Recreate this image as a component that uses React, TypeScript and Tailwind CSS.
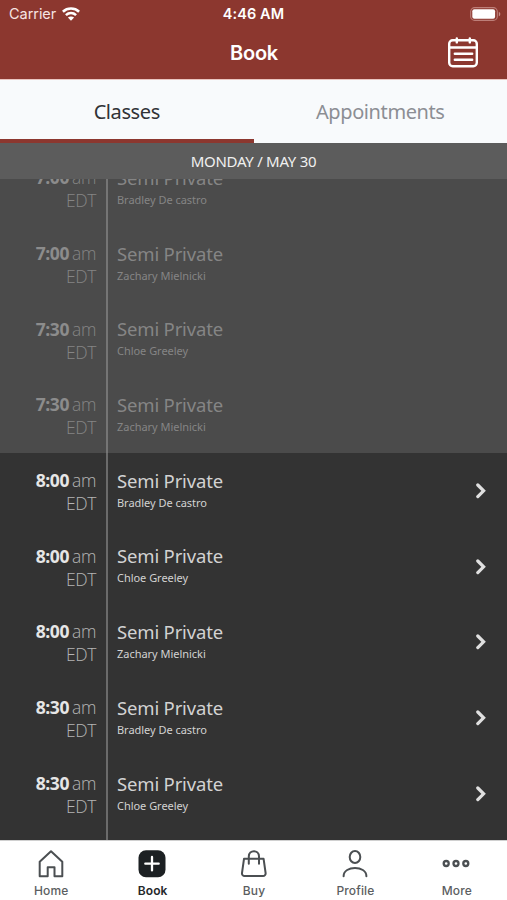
import React from "react";

type Session = { time: string; coach: string; past?: boolean };

const sessions: Session[] = [
  { time: "7:00", coach: "Bradley De castro", past: true },
  { time: "7:00", coach: "Zachary Mielnicki", past: true },
  { time: "7:30", coach: "Chloe Greeley", past: true },
  { time: "7:30", coach: "Zachary Mielnicki", past: true },
  { time: "8:00", coach: "Bradley De castro" },
  { time: "8:00", coach: "Chloe Greeley" },
  { time: "8:00", coach: "Zachary Mielnicki" },
  { time: "8:30", coach: "Bradley De castro" },
  { time: "8:30", coach: "Chloe Greeley" },
];

function WifiIcon() {
  return (
    <svg width="18" height="14" viewBox="0 0 18 14" fill="none" stroke="#fff" strokeWidth="2.6">
      <path d="M.9 4.7C5.4.5 12.6.5 17.1 4.7" />
      <path d="M3.9 8.1c3-2.7 7.2-2.7 10.2 0" />
      <path d="M9 13.7 5.9 10.6c1.7-1.6 4.5-1.6 6.2 0Z" fill="#fff" stroke="none" />
    </svg>
  );
}

function BatteryIcon() {
  return (
    <svg width="31" height="14" viewBox="0 0 31 14" fill="none">
      <rect x=".7" y=".6" width="26.6" height="12.8" rx="4" stroke="#bd7f79" strokeWidth="1.1" />
      <rect x="2.3" y="2.3" width="22.8" height="9.4" rx="2" fill="#fff" />
      <path d="M28.8 4.7c2 .8 2 3.8 0 4.6Z" fill="#c58d87" />
    </svg>
  );
}

function CalendarIcon() {
  return (
    <svg width="32" height="32" viewBox="0 0 32 32" fill="none" stroke="#fff" strokeWidth="2.4" strokeLinecap="round">
      <rect x="2.2" y="4.2" width="27.6" height="26" rx="3.5" />
      <path d="M2.2 11.5h27.6M9.8 2.4v4M22.8 2.4v4M7.8 17.7h17.4M7.8 23.8h17.4" />
    </svg>
  );
}

function HomeIcon() {
  return (
    <svg width="28" height="30" viewBox="0 0 28 30" fill="none" stroke="#4b4f52" strokeWidth="2" strokeLinejoin="round">
      <path d="M2.7 12.8 14 2.2l11.3 10.6v14.4h-7.8v-9h-6.8v9h-8Z" />
    </svg>
  );
}

function BookIcon() {
  return (
    <svg width="28" height="30" viewBox="0 0 28 30" fill="none">
      <rect x=".5" y="1.2" width="27" height="27" rx="7.5" fill="#1c2023" />
      <path d="M14 8v13.4M7.3 14.7h13.4" stroke="#fff" strokeWidth="2.3" strokeLinecap="round" />
    </svg>
  );
}

function BagIcon() {
  return (
    <svg width="28" height="30" viewBox="0 0 28 30" fill="none" stroke="#4b4f52" strokeWidth="2" strokeLinecap="round" strokeLinejoin="round">
      <path d="M4 9.8h19.6l2 14.2a2.6 2.6 0 0 1-2.6 3H4.6A2.6 2.6 0 0 1 2 24Z" />
      <path d="M8.8 14.7V7.4c0-7 10.2-7 10.2 0v7.3" />
    </svg>
  );
}

function ProfileIcon() {
  return (
    <svg width="28" height="30" viewBox="0 0 28 30" fill="none" stroke="#4b4f52" strokeWidth="2" strokeLinecap="round">
      <ellipse cx="14" cy="8" rx="5.3" ry="6" />
      <path d="M2.6 27.2c0-11 22.8-11 22.8 0" />
    </svg>
  );
}

function MoreIcon() {
  return (
    <svg width="28" height="30" viewBox="0 0 28 30" fill="none" stroke="#4b4f52" strokeWidth="2.3">
      <circle cx="4.2" cy="14.5" r="2.5" />
      <circle cx="14" cy="14.5" r="2.5" />
      <circle cx="23.8" cy="14.5" r="2.5" />
    </svg>
  );
}

function Row({ time, coach, past }: Session) {
  return (
    <div className={`flex h-[75.7px] shrink-0 ${past ? "bg-[#4b4b4b]" : "bg-[#333333]"}`}>
      <div className={`w-[108px] shrink-0 border-r-2 pr-[10px] pt-[15.7px] text-right text-[17.5px] leading-[23px] font-light tracking-[-0.4px] ${past ? "border-[#757575] text-[#858585]" : "border-[#6b6b6b] text-[#b5b5b5]"}`}>
        <div className="whitespace-nowrap">
          <span className={`font-bold ${past ? "text-[#8c8c8c]" : "text-[#e6e6e6]"}`}>{time}</span>
          <span className="ml-[3px]">am</span>
        </div>
        <div>EDT</div>
      </div>
      <div className={`grow pl-[9px] pt-[15.5px] font-['Noto_Sans',sans-serif] ${past ? "text-[#858585]" : "text-[#d2d2d2]"}`}>
        <div className="text-[18.5px] leading-[24px] tracking-[-0.17px]">Semi Private</div>
        <div className="text-[11px] leading-[20px] tracking-[-0.03px]">{coach}</div>
      </div>
      {!past && (
        <div className="flex items-center pr-[20px]">
          <svg width="12" height="16" viewBox="0 0 12 16" fill="none" stroke="#e0e0e0" strokeWidth="3.2" strokeLinecap="round">
            <path d="m2.8 2 5.8 5.8-5.8 5.8" />
          </svg>
        </div>
      )}
    </div>
  );
}

const navItems = [
  { label: "Home", Icon: HomeIcon },
  { label: "Book", Icon: BookIcon, active: true },
  { label: "Buy", Icon: BagIcon },
  { label: "Profile", Icon: ProfileIcon },
  { label: "More", Icon: MoreIcon },
];

export default function App() {
  return (
    <div className="flex h-[900px] w-[507px] flex-col overflow-hidden bg-[#333333] font-['Open_Sans',sans-serif]">
      <header className="h-[79px] shrink-0 bg-[#8c372f] font-['Inter',sans-serif] text-white">
        <div className="grid h-[27px] grid-cols-3 items-center px-[7px] text-[14.5px]">
          <div className="flex items-center gap-[6px] pl-[2px] text-[#f6e4e2]">
            <span className="tracking-[-0.05px]">Carrier</span>
            <WifiIcon />
          </div>
          <div className="text-center font-semibold tracking-[0.1px]">4:46 AM</div>
          <div className="-mr-px flex justify-end"><BatteryIcon /></div>
        </div>
        <div className="grid h-[50px] grid-cols-3 items-center">
          <h1 className="col-start-2 pl-px pt-px text-center text-[20px] font-semibold tracking-[-0.2px]">Book</h1>
          <div className="flex justify-end pr-[28px]"><CalendarIcon /></div>
        </div>
      </header>

      <div className="flex h-[64px] shrink-0 border-t border-[#eac5c0] bg-[#f8fafc] font-['Noto_Sans',sans-serif] text-[20px] tracking-[-0.4px]">
        <div className="flex w-1/2 items-center justify-center border-b-4 border-[#8c372f] pt-[4px] text-[#303236]">Classes</div>
        <div className="flex w-1/2 items-center justify-center text-[#8c8e94]">Appointments</div>
      </div>

      <div className="flex h-[36px] shrink-0 items-center justify-center bg-[#5c5c5c] font-['Noto_Sans',sans-serif] text-[15px] tracking-[-0.28px] text-[#f0f0f0]">
        MONDAY / MAY 30
      </div>

      <div className="min-h-0 grow overflow-hidden">
        <div className="-mt-[28.5px] flex flex-col">
          {sessions.map((s, i) => <Row key={i} {...s} />)}
          <div className="flex h-4"><div className="w-[108px] border-r-2 border-[#6b6b6b]" /></div>
        </div>
      </div>

      <nav className="flex h-[60px] shrink-0 border-t border-[#d0d0d0] bg-white font-['Inter',sans-serif]">
        {navItems.map(({ label, Icon, active }) => (
          <div key={label} className="flex flex-1 flex-col items-center pt-[8px]">
            <Icon />
            <span className={`mt-[4px] pl-px text-[12px] leading-[16px] tracking-[0.15px] ${active ? "font-semibold text-[#25282b]" : "font-medium text-[#5b5e61]"}`}>{label}</span>
          </div>
        ))}
      </nav>
    </div>
  );
}
